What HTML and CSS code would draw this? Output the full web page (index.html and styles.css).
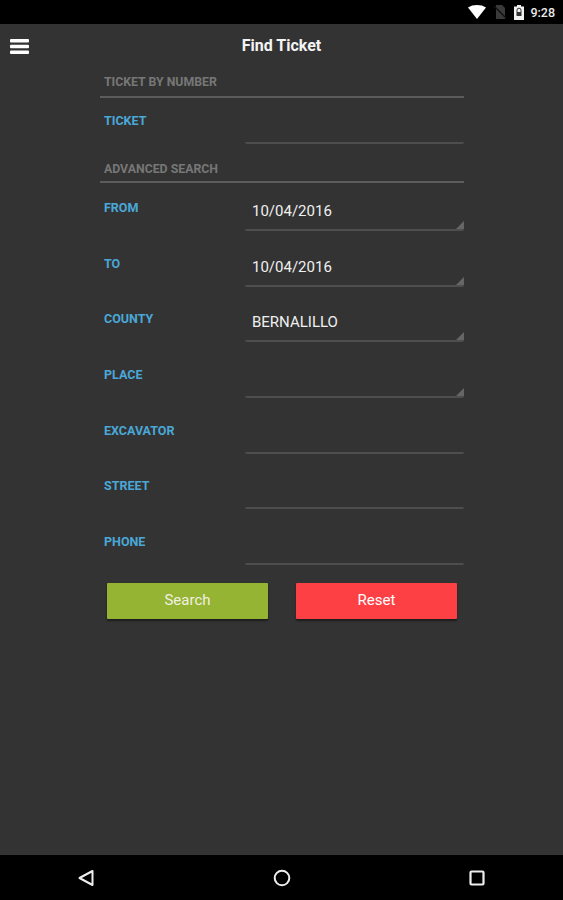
FILE: index.html
```html
<!DOCTYPE html>
<html lang="en">
<head>
<meta charset="utf-8">
<title>Find Ticket</title>
<link rel="stylesheet" href="styles.css">
</head>
<body>
<div class="screen">
  <header class="status">
    <svg class="ic-wifi" width="18" height="14" viewBox="0 0 18 14"><path d="M0 2.5C2.5.8 5.6 0 9 0s6.500.8 9 2.500L9 14z" fill="#fff"/></svg>
    <svg class="ic-sim" width="14" height="14" viewBox="0 0 14 14"><path d="M3 0h6l3 3v11H3z" fill="#3a3a3a"/><path d="M1 1l12 12" stroke="#111" stroke-width="1.500"/></svg>
    <svg class="ic-batt" width="10" height="15" viewBox="0 0 10 15"><path d="M3 0h4v1.500h3V15H0V1.500h3z" fill="#f2f2f2"/><path d="M3 7V5.200a2 2 0 0 1 4 0V7" fill="none" stroke="#333" stroke-width="1"/><rect x="2.500" y="7" width="5" height="4" fill="#333"/></svg>
    <span class="clock">9:28</span>
  </header>
  <div class="toolbar">
    <svg class="menu" width="19" height="15" viewBox="0 0 19 15"><rect width="19" height="3.400" rx="1"/><rect y="5.800" width="19" height="3.400" rx="1"/><rect y="11.600" width="19" height="3.400" rx="1"/></svg>
    <h1 class="title">Find Ticket</h1>
  </div>
  <main class="form">
    <h2 class="section first">TICKET BY NUMBER</h2>
    <div class="row single">
      <span class="label">TICKET</span><div class="field"></div>
    </div>
    <h2 class="section second">ADVANCED SEARCH</h2>
    <div class="row"><span class="label">FROM</span><div class="field picker">10/04/2016</div></div>
    <div class="row"><span class="label">TO</span><div class="field picker">10/04/2016</div></div>
    <div class="row"><span class="label">COUNTY</span><div class="field picker">BERNALILLO</div></div>
    <div class="row"><span class="label">PLACE</span><div class="field picker"></div></div>
    <div class="row"><span class="label">EXCAVATOR</span><div class="field"></div></div>
    <div class="row"><span class="label">STREET</span><div class="field"></div></div>
    <div class="row"><span class="label">PHONE</span><div class="field"></div></div>
    <div class="actions">
      <button class="btn search" type="button">Search</button>
      <button class="btn reset" type="button">Reset</button>
    </div>
  </main>
  <nav class="sysnav">
    <svg width="18" height="18" viewBox="0 0 18 18"><path d="M15.500 2v14L2.500 9z" fill="none" stroke="#eee" stroke-width="2" stroke-linejoin="round"/></svg>
    <svg width="18" height="18" viewBox="0 0 18 18"><circle cx="9" cy="9" r="7.300" fill="none" stroke="#eee" stroke-width="2"/></svg>
    <svg width="18" height="18" viewBox="0 0 18 18"><rect x="2.500" y="2.500" width="13" height="13" rx="1" fill="none" stroke="#eee" stroke-width="2.200"/></svg>
  </nav>
</div>
</body>
</html>
```
FILE: styles.css
```css
* { box-sizing: border-box; }
html, body { margin: 0; padding: 0; }
body { font-family: Roboto, "Liberation Sans", sans-serif; background: #333; }
.screen { width: 563px; height: 900px; display: flex; flex-direction: column; background: #333; overflow: hidden; }
.status { height: 24px; flex: none; background: #000; display: flex; align-items: center; justify-content: flex-end; padding-right: 8px; color: #e8e8e8; }
.ic-wifi { margin-right: 7px; }
.ic-sim { margin-right: 7px; }
.ic-batt { margin-right: 6px; }
.clock { font-size: 12.500px; font-weight: 500; }
.toolbar { height: 44px; flex: none; display: flex; align-items: center; justify-content: center; position: relative; }
.menu { position: absolute; left: 10px; top: 15px; fill: #fff; }
.title { margin: -1px 0 0; font-size: 16px; font-weight: 700; color: #f4f4f4; }
.form { flex: 1; width: 364px; margin-left: 100px; }
.section { margin: 0; padding: 7px 0 0 4px; font-size: 12.300px; line-height: 14px; font-weight: 700; color: #777; border-bottom: 2px solid #5c5c5c; }
.section.first { height: 30px; }
.section.second { height: 21px; margin-top: 18px; padding-top: 0; }
.row { height: 55.700px; display: flex; justify-content: space-between; align-items: flex-start; padding-left: 4px; }
.row.single { height: 46px; }
.label { font-size: 12.500px; line-height: 14px; font-weight: 700; color: #4aa8d8; margin-top: 18px; }
.single .label { margin-top: 16px; }
.field { width: 219px; height: 45px; margin-top: 3px; padding: 13px 0 0 7px; font-size: 15px; line-height: 24px; color: #f0f0f0; border-bottom: 2px solid #4e4e4e; border-radius: 0 0 2px 2px; position: relative; }
.single .field { margin-top: 1px; }
.picker::after { content: ""; position: absolute; right: 0; bottom: 0; border-style: solid; border-width: 0 0 8px 8px; border-color: transparent transparent #666 transparent; }
.actions { display: flex; gap: 28px; padding-left: 7px; margin-top: 10px; }
.btn { width: 161px; height: 36px; padding: 0 0 2px; border: 0; border-radius: 1px; font: 400 15px Roboto, sans-serif; color: #f0f0e0; box-shadow: 0 2px 2px rgba(0,0,0,.45); }
.search { background: #96b433; }
.reset { background: #fd4044; color: #fff; }
.sysnav { height: 45px; flex: none; margin-top: auto; background: #000; display: flex; justify-content: space-between; padding: 14px 77px 0; align-items: flex-start; }
```
